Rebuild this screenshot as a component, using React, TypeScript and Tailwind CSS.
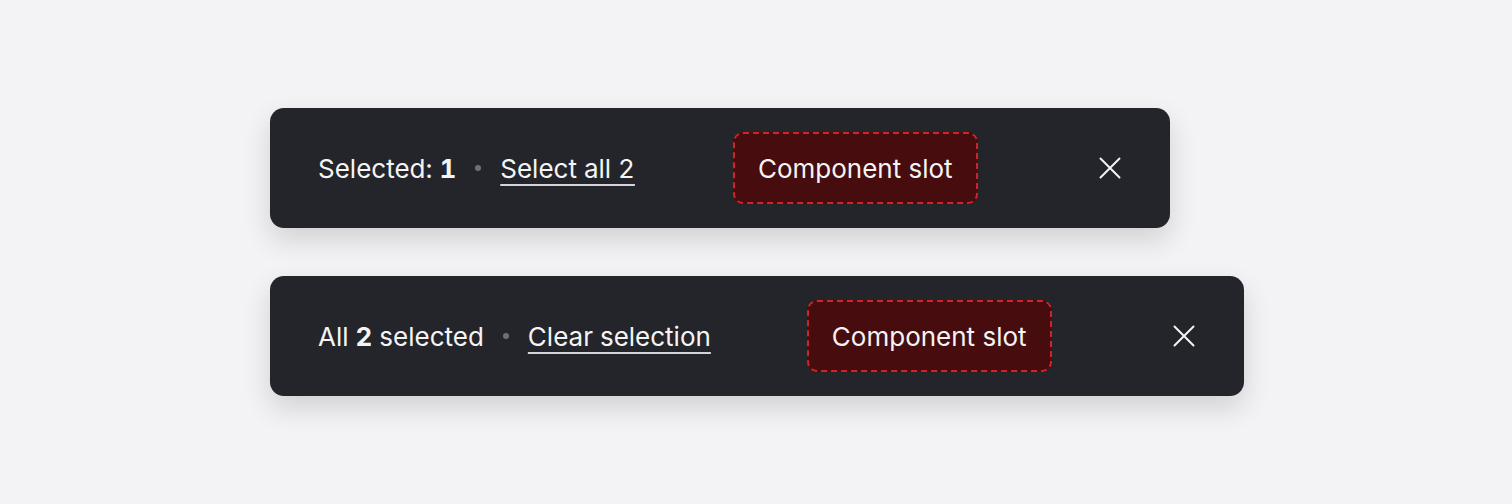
import React from 'react';

function CloseIcon() {
  return (
    <svg width="22" height="22" viewBox="0 0 22 22" fill="none" className="text-[#f4f4f5]">
      <path d="M1.5 1.5L20.5 20.5M20.5 1.5L1.5 20.5" stroke="currentColor" strokeWidth="2" strokeLinecap="round" />
    </svg>
  );
}

function Dot() {
  return <span className="mx-[19px] inline-block h-[6px] w-[6px] rounded-full bg-[#6e6f75]" />;
}

function Slot() {
  return (
    <div className="flex h-[72px] items-center rounded-[10px] border-2 border-dashed border-[#d0242a] bg-[#470c0d] px-[23px]">
      Component slot
    </div>
  );
}

interface BarProps {
  children: React.ReactNode;
  slotGap: string;
}

function SelectionBar({ children, slotGap }: BarProps) {
  return (
    <div className="flex h-[120px] w-fit items-center rounded-[14px] bg-[#24252a] pl-12 pr-[49px] text-[26px] text-[#f4f4f5] shadow-[0_12px_28px_rgba(0,0,0,0.14)]">
      <div className="flex items-center tabular-nums">{children}</div>
      <div className={slotGap}>
        <Slot />
      </div>
      <button className="ml-[121px] flex items-center justify-center">
        <CloseIcon />
      </button>
    </div>
  );
}

export default function App() {
  return (
    <div
      className="flex min-h-[504px] w-full flex-col gap-12 bg-[#f3f3f5] pl-[270px] pt-[108px]"
      style={{ fontFamily: 'Inter, "Noto Sans", sans-serif' }}
    >
      <SelectionBar slotGap="ml-[98px]">
        <span>
          Selected: <b className="font-bold">1</b>
        </span>
        <Dot />
        <a className="underline decoration-[#d4d4d8] decoration-[1.5px] underline-offset-[6px]">Select all 2</a>
      </SelectionBar>
      <SelectionBar slotGap="ml-[96px]">
        <span>
          All <b className="font-bold">2</b> selected
        </span>
        <Dot />
        <a className="underline decoration-[#d4d4d8] decoration-[1.5px] underline-offset-[6px]">Clear selection</a>
      </SelectionBar>
    </div>
  );
}
